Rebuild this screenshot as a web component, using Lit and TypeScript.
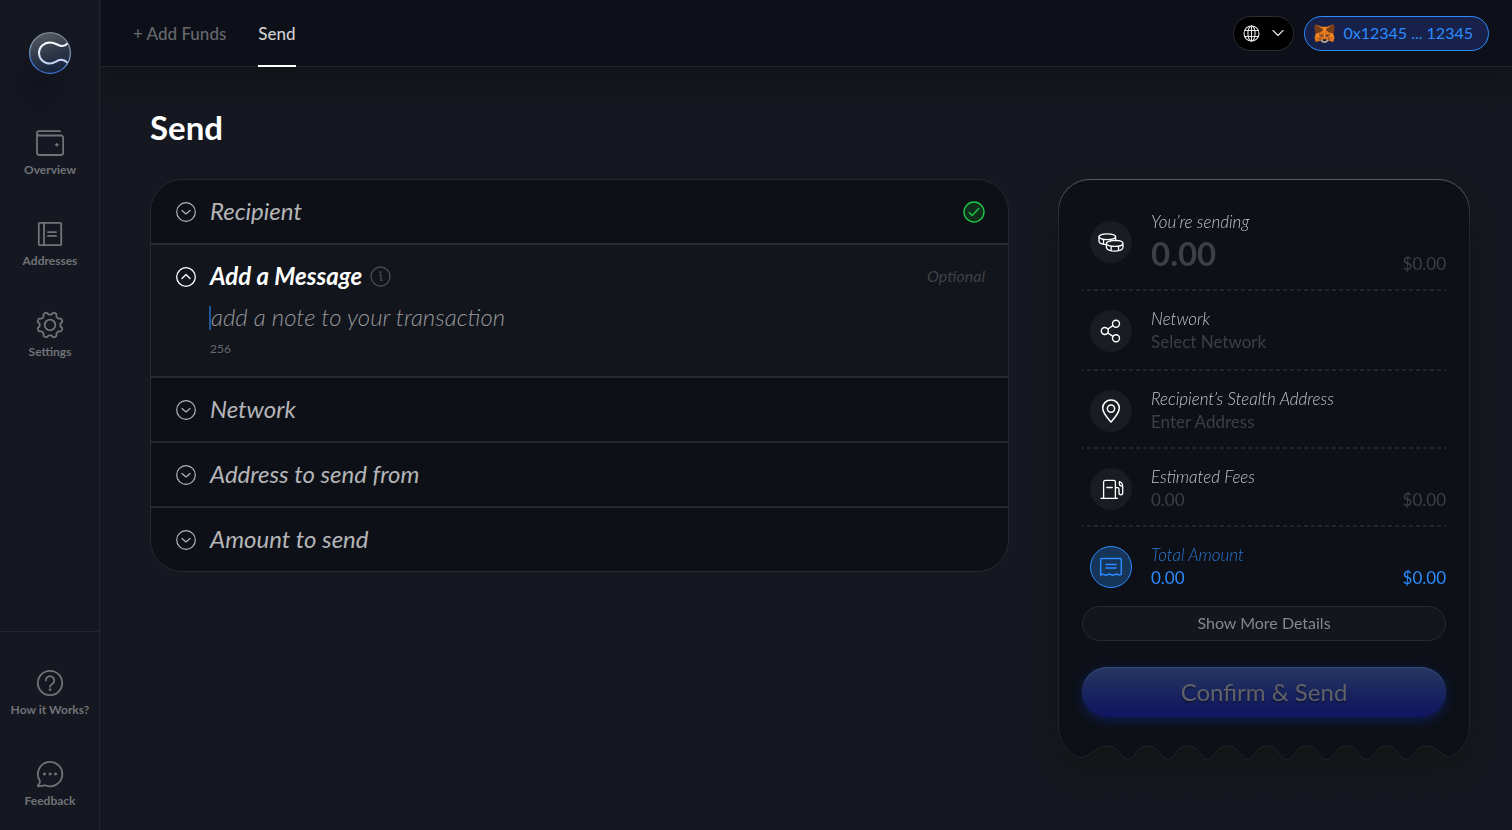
import { LitElement, html, css, svg, type TemplateResult } from "lit";
import { customElement, state } from "lit/decorators.js";
import { classMap } from "lit/directives/class-map.js";

const line = (body: TemplateResult, size: number, width = 1.5) => html`
  <svg width=${size} height=${size} viewBox="0 0 ${size} ${size}" fill="none" stroke="currentColor"
    stroke-width=${width} stroke-linecap="round" stroke-linejoin="round" aria-hidden="true">${body}</svg>`;

/* Outline of an eight-toothed cog centred on (14, 14). */
const cogPath = (() => {
  const pts: string[] = [];
  for (let i = 0; i < 160; i++) {
    const a = (i / 160) * Math.PI * 2;
    const r = 11.6 - 1.3 * Math.tanh(Math.cos(a * 8) * 2.2);
    pts.push(`${(14 + r * Math.sin(a)).toFixed(2)} ${(14 - r * Math.cos(a)).toFixed(2)}`);
  }
  return `M${pts.join("L")}Z`;
})();

const icons = {
  wallet: line(svg`<path d="M24 2.200H2.800A2 2 0 0 0 1 4.200V23.800a2.200 2.200 0 0 0 2.200 2.200h21.800a2.200 2.200 0 0 0 2.200-2.200V8.700A2.200 2.200 0 0 0 25 6.500H3A2.100 2.100 0 0 1 1 4.400"/><circle cx="20.800" cy="15.800" r="1.200" fill="currentColor" stroke-width="1"/>`, 28, 1.8),
  book: line(svg`<rect x="2.800" y="2.800" width="22.400" height="22.400" rx="1"/><path d="M8 3v22M12 12.200h8M12 15.900h8"/>`, 28, 1.8),
  cog: line(svg`<path d=${cogPath}/><circle cx="14" cy="14" r="5.300"/>`, 28, 1.8),
  help: line(svg`<circle cx="14" cy="14" r="12.200"/><path d="M9.800 11.400a4.200 4.200 0 1 1 6.500 3.500c-1.500 1-2.300 1.500-2.300 2.900"/><circle cx="14" cy="20.600" r=".9" fill="currentColor" stroke-width="1"/>`, 28, 1.8),
  chat: line(svg`<path d="M3.700 20.500A12.200 12.200 0 1 1 9.200 25.300C6.800 25.200 4.500 26.200 2.600 26.300 1.500 26.300 1.800 25.400 2.500 24.600 3.500 23.600 4.400 22.400 3.700 20.500z"/><g fill="currentColor" stroke-width="1"><circle cx="8.400" cy="14" r="1.100"/><circle cx="14" cy="14" r="1.100"/><circle cx="19.600" cy="14" r="1.100"/></g>`, 28, 1.8),
  down: line(svg`<circle cx="10" cy="10" r="9.300"/><path d="M6 8.500l4 3.500 4-3.500"/>`, 20, 1.2),
  up: line(svg`<circle cx="10" cy="10" r="9.300"/><path d="M6 11.500l4-4 4 4"/>`, 20, 1.3),
  info: line(svg`<circle cx="10.500" cy="10.500" r="9.500"/><path d="M9.500 9h1.300v5.300h1.200"/><circle cx="10.500" cy="6.200" r=".5" fill="currentColor"/>`, 21, 1.4),
  check: line(svg`<circle cx="11" cy="11" r="10" fill="#0f2f1a"/><path d="M6.200 11.600l3 3 6.600-7"/>`, 22, 1.4),
  globe: line(svg`<circle cx="8.500" cy="8.500" r="7.500"/><ellipse cx="8.500" cy="8.500" rx="3.600" ry="7.500"/><path d="M8.500 1v15M1.900 5.500h13.200M1.900 11.500h13.200"/>`, 17, 1.1),
  chevron: html`<svg width="12" height="8" viewBox="0 0 12 8" fill="none" stroke="currentColor" stroke-width="1.100" stroke-linecap="round" stroke-linejoin="round" aria-hidden="true"><path d="M1 1.500l5 5 5-5"/></svg>`,
  coins: line(svg`<ellipse cx="9.300" cy="7.800" rx="8.300" ry="2.900"/><path d="M1 7.800v4.400c0 1.800 2.900 3.100 7 3.300M17.600 7.800v3.400M5.500 10.500v4.500M12.300 10.500v1.500"/><path d="M17.600 11.300c4.200.1 7.400 1.300 7.400 3.100 0 1.700-3.700 3-8.300 3s-8.300-1.300-8.300-3c0-.9 1.300-1.700 3.300-2.300 1.500-.5 3.500-.8 5.900-.8M8.400 14.400v4.200c0 2 3.700 3.500 8.300 3.500s8.300-1.500 8.300-3.500v-4.200M13.200 17.300v4.300M20.500 17.300v4.200"/>`, 26, 1.3),
  share: line(svg`<circle cx="6.800" cy="13" r="3.500"/><circle cx="18" cy="5.800" r="3.500"/><circle cx="18" cy="20.200" r="3.500"/><path d="M9.900 11l5-3.300M9.900 15l5 3.300"/>`, 26, 1.4),
  pin: line(svg`<path d="M13 24c-1.500-2-8.300-8.200-8.300-13.900C4.700 5.400 8.400 2.100 13 2.100s8.300 3.300 8.300 8C21.300 15.800 14.500 22 13 24z"/><circle cx="13" cy="10.600" r="3.600"/>`, 26, 1.5),
  pump: line(svg`<path d="M3 22.300h16.500M5.600 22V6a1.600 1.600 0 0 1 1.600-1.600h8.600A1.600 1.600 0 0 1 17.400 6v16M8.800 11.500h5.500M17.500 11.600h1.900c1 0 1.600.7 1.600 1.600v3.600c0 2.800 3.700 2.800 3.700 0V10.400c0-2-1.200-4-3.300-4.700v2.600c0 1.200 1 1.600 3 2"/>`, 26, 1.3),
  receipt: line(svg`<path d="M2.700 20.300V5.500c0-.6.4-1 1-1h18.600c.6 0 1 .4 1 1v14.800c-1.500.9-2.500.9-3.400.4-1.200-.8-2.200-.8-3.400 0s-2.300.8-3.500 0-2.300-.8-3.500 0-2.200.8-3.400 0-2-.8-3.400.4z"/><path d="M8 10.400h10M8 14.100h10"/>`, 26, 1.5),
};

const fox = html`
  <svg width="21" height="19" viewBox="0.500 0.500 34.600 32" preserveAspectRatio="none" aria-hidden="true">
    <path fill="#E2761B" d="M32.960 1L19.820 10.720L22.270 4.990zM2.660 1L15.680 10.810L13.350 4.990z"/>
    <path fill="#E4761B" d="M28.230 23.530L24.730 28.870L32.220 30.930L34.360 23.650zM1.270 23.650L3.400 30.930L10.870 28.870L7.390 23.530zM10.470 14.510L8.390 17.650L15.800 17.990L15.550 9.990zM25.150 14.510L19.990 9.900L19.820 17.990L27.230 17.650zM10.870 28.870L15.360 26.710L11.500 23.700zM20.270 26.710L24.730 28.870L24.120 23.700z"/>
    <path fill="#D7C1B3" d="M24.730 28.870L20.270 26.710L20.630 29.610L20.590 30.840zM10.870 28.870L15.030 30.840L15.010 29.610L15.360 26.710z"/>
    <path fill="#CD6116" d="M10.870 28.870L11.530 23.530L7.390 23.650zM24.100 23.530L24.730 28.870L28.230 23.650z"/>
    <path fill="#DB6B18" d="M27.230 17.650L19.820 17.990L20.510 21.780L21.610 19.490L24.240 20.700zM11.380 20.700L14.010 19.490L15.100 21.780L15.800 17.990L8.390 17.650z"/>
    <path fill="#E4751F" d="M8.390 17.650L11.500 23.700L11.380 20.700zM24.250 20.700L24.120 23.700L27.230 17.650zM15.800 17.990L15.100 21.780L15.970 26.250L16.170 20.360zM19.820 17.990L19.470 20.350L19.650 26.250L20.520 21.780z"/>
    <path fill="#F6851B" d="M20.520 21.780L19.650 26.250L20.270 26.710L24.120 23.700L24.250 20.700zM11.380 20.700L11.500 23.700L15.360 26.710L15.970 26.250L15.100 21.780z"/>
    <path fill="#C0AD9E" d="M20.590 30.840L20.630 29.610L20.290 29.320H15.330L15.010 29.610L15.030 30.840L10.870 28.870L12.330 30.070L15.290 32.090H20.330L23.300 30.070L24.730 28.870z"/>
    <path fill="#161616" d="M20.270 26.710L19.650 26.250H15.970L15.360 26.710L15.010 29.610L15.330 29.320H20.290L20.630 29.610z"/>
    <path fill="#763D16" d="M33.520 11.350L34.620 5.990L32.960 1L20.270 10.390L25.150 14.510L32.050 16.520L33.570 14.750L32.910 14.270L33.960 13.310L33.160 12.690L34.210 11.880zM1 5.990L2.100 11.350L1.390 11.880L2.450 12.690L1.650 13.310L2.700 14.270L2.040 14.750L3.560 16.520L10.460 14.510L15.360 10.390L2.660 1z"/>
    <path fill="#F6851B" d="M32.050 16.520L25.150 14.510L27.230 17.650L24.120 23.700L28.230 23.650H34.360zM10.470 14.510L3.560 16.520L1.270 23.650H7.390L11.500 23.700L8.390 17.650zM19.820 17.990L20.270 10.390L22.270 4.990H13.350L15.360 10.390L15.800 17.990L15.960 20.370L15.970 26.250H19.650L19.660 20.370z"/>
    <path fill="#233447" d="M15.100 21.780L11.380 20.700L14.010 19.490zM20.520 21.780L21.610 19.490L24.250 20.700z"/>
  </svg>`;

const logo = html`
  <svg width="42" height="42" viewBox="0 0 42 42" fill="none" role="img" aria-label="Home">
    <defs>
      <linearGradient id="face" x1="14" y1="0" x2="26" y2="42" gradientUnits="userSpaceOnUse">
        <stop stop-color="#5a5c63"/><stop offset=".5" stop-color="#2f3949"/><stop offset="1" stop-color="#12203c"/>
      </linearGradient>
      <linearGradient id="rim" x1="28" y1="0" x2="16" y2="42" gradientUnits="userSpaceOnUse">
        <stop stop-color="#7c808a"/><stop offset=".5" stop-color="#86a3c0"/><stop offset=".85" stop-color="#3a78e0"/><stop offset="1" stop-color="#4a72c0"/>
      </linearGradient>
      <linearGradient id="mark" x1="21" y1="9" x2="21" y2="33" gradientUnits="userSpaceOnUse">
        <stop stop-color="#fff"/><stop offset="1" stop-color="#b9cdf2"/>
      </linearGradient>
    </defs>
    <circle cx="21" cy="21" r="20.400" fill="url(#face)" stroke="url(#rim)" stroke-width="1.200"/>
    <path d="M38.500 11.300c-2.300 2.800-5 3.400-8 2.200-3-1.200-5.500-3-9.300-3-6.500 0-11.200 4.700-11.200 10.500s4.700 10.500 11.200 10.500c3.800 0 6.300-2.800 9.300-3.500 3-.7 5.700.4 8 2.700" stroke="url(#mark)" stroke-width="2"/>
  </svg>`;

/* Torn lower edge: one soft corner, eight scallops, one soft corner. */
const tornEdge = (() => {
  const step = 39.8;
  let d = "M.5 0C.5 15 13 30.500 22.500 30.500C31 30.500 39 19 50 19";
  for (let i = 0; i < 8; i++) {
    const x = 50 + i * step;
    d += `C${x + 13} 19 ${x + 12} 32.600 ${x + step / 2} 32.600S${x + 27} 19 ${x + step} 19`;
  }
  return d + "C379 19 384 29.800 390.700 29.800C398 29.800 411.500 16 411.500 0";
})();

@customElement("side-nav")
class SideNav extends LitElement {
  static styles = css`
    :host { display: flex; flex-direction: column; align-items: center; box-sizing: border-box; border-right: 1px solid #23262c; background: radial-gradient(circle at 40px 85px, #11141c 0, #151820 44px); }
    .logo { margin-top: 32px; height: 42px; }
    .logo svg { display: block; }
    .group { display: flex; flex-direction: column; gap: 43px; width: 100%; }
    .main { margin-top: 55px; }
    .foot { margin-top: auto; box-sizing: border-box; padding: 37px 0 22px; border-top: 1px solid #23262c; }
    .item { display: flex; flex-direction: column; align-items: center; gap: 6px; padding-left: 1px; color: #717377; text-decoration: none; font-size: 12px; line-height: 14px; font-weight: 700; white-space: nowrap; }
    .item svg { display: block; }
  `;
  private item(icon: TemplateResult, label: string) {
    return html`<a class="item" href="#">${icon}<span>${label}</span></a>`;
  }
  render() {
    return html`
      <a class="logo" href="#">${logo}</a>
      <nav class="group main">
        ${this.item(icons.wallet, "Overview")} ${this.item(icons.book, "Addresses")} ${this.item(icons.cog, "Settings")}
      </nav>
      <nav class="group foot">
        ${this.item(icons.help, "How it Works?")} ${this.item(icons.chat, "Feedback")}
      </nav>`;
  }
}

@customElement("top-bar")
class TopBar extends LitElement {
  static styles = css`
    :host { display: flex; justify-content: space-between; align-items: center; box-sizing: border-box; height: 67px; padding: 0 23px 0 32px; border-bottom: 1px solid #23262a; background: #0d1018; box-shadow: 0 18px 28px rgba(16, 19, 20, 0.7); clip-path: inset(0 0 -60px 0); }
    .tabs { display: flex; gap: 32px; align-self: stretch; }
    .tab { display: flex; align-items: center; box-sizing: border-box; margin-bottom: -1px; padding-top: 2px; border-bottom: 2px solid transparent; color: #66686c; text-decoration: none; font-size: 17px; line-height: 20px; font-weight: 500; }
    .tab.active { color: #d0d1d3; border-bottom-color: #fff; }
    .tools { display: flex; gap: 10px; }
    button { display: flex; align-items: center; box-sizing: border-box; height: 35px; margin: 0; border-radius: 18px; font: inherit; cursor: pointer; }
    .lang { gap: 12px; padding: 0 9px; border: 1px solid #2b2d31; background: #000; color: #e6e6e6; }
    .wallet { gap: 8px; padding: 0 15px 0 9px; border: 1px solid #2b8cff; background: #182149; color: #2b8cff; font-size: 16px; line-height: 20px; }
  `;
  render() {
    return html`
      <nav class="tabs">
        <a class="tab" href="#">+ Add Funds</a>
        <a class="tab active" href="#" aria-current="page">Send</a>
      </nav>
      <div class="tools">
        <button class="lang" aria-label="Language">${icons.globe}${icons.chevron}</button>
        <button class="wallet">${fox}<span>0x12345 ... 12345</span></button>
      </div>`;
  }
}

@customElement("send-steps")
class SendSteps extends LitElement {
  static styles = css`
    :host { display: block; box-sizing: border-box; border: 1px solid #26292d; border-radius: 32px; background: #0d1017; overflow: hidden; }
    .step + .step { border-top: 2px solid #26292d; }
    .step.open { background: #12151c; }
    .head { display: flex; align-items: center; box-sizing: border-box; height: 63px; padding: 0 23px 0 25px; }
    .open .head { height: 57px; padding-top: 6px; }
    h2 { margin: 0; font-size: 24px; line-height: 30px; font-weight: 400; }
    .toggle { display: flex; align-items: center; gap: 14px; margin: 0; padding: 0; border: 0; background: none; color: #b4b5b7; font: inherit; font-style: italic; cursor: pointer; }
    .open .toggle { color: #fff; font-weight: 700; }
    .toggle span, .optional { padding-bottom: 2px; }
    svg { display: block; }
    .info { margin-left: 8px; color: #46484c; }
    .done { margin-left: auto; color: #1fc647; }
    .optional { margin-left: auto; color: #3f4145; font-size: 16px; line-height: 20px; font-style: italic; }
    .body { display: flex; flex-direction: column; gap: 10px; padding: 0 23px 20px 58px; }
    .note { box-sizing: border-box; height: 30px; margin: 0; padding: 0 0 0 2px; border: 0; background: linear-gradient(#1d5798, #1d5798) 0 4px / 2px 24px no-repeat; outline: none; color: #fff; font: italic 300 24px/30px Lato, sans-serif; }
    .note::placeholder { color: #96979a; opacity: 1; }
    .left { padding-left: 1px; color: #66686c; font-size: 12px; line-height: 14px; }
  `;
  @state() private open = 1;
  private names = ["Recipient", "Add a Message", "Network", "Address to send from", "Amount to send"];
  render() {
    return this.names.map((name, i) => {
      const message = i === 1;
      const open = this.open === i;
      return html`
        <section class=${classMap({ step: true, open })}>
          <div class="head">
            <h2><button class="toggle" aria-expanded=${open} @click=${() => (this.open = open ? -1 : i)}>${open ? icons.up : icons.down}<span>${name}</span></button></h2>
            ${message ? html`<span class="info">${icons.info}</span><span class="optional">Optional</span>` : ""}
            ${i === 0 ? html`<span class="done">${icons.check}</span>` : ""}
          </div>
          ${message && open ? html`
            <div class="body">
              <input class="note" type="text" maxlength="256" aria-label="Add a Message" placeholder="add a note to your transaction" />
              <span class="left">256</span>
            </div>` : ""}
        </section>`;
    });
  }
}

@customElement("send-receipt")
class SendReceipt extends LitElement {
  static styles = css`
    :host { display: block; filter: drop-shadow(0 16px 16px rgba(17, 20, 18, 0.75)); }
    .sheet { padding: 0 23px 10px; border: 1px solid transparent; border-bottom: 0; border-radius: 32px 32px 0 0; background: linear-gradient(#0d1017, #0d1017) padding-box, linear-gradient(180deg, #58595b 0, #22252a 48px) border-box; }
    .edge { display: block; width: 100%; height: 34px; }
    .row { display: grid; grid-template-columns: 42px 1fr auto; column-gap: 19px; align-items: start; padding: 16px 0 14px 8px; }
    .row.network { padding-bottom: 16px; }
    .row.first { padding-top: 30px; }
    .rule { height: 2px; background: repeating-linear-gradient(90deg, #1e252e 0 2px, transparent 2px 5px, #1e252e 5px 7px); }
    .disc { display: flex; align-items: center; justify-content: center; box-sizing: border-box; width: 42px; height: 42px; margin-top: 3px; border-radius: 50%; background: #191c23; color: #fff; }
    .first .disc { margin-top: 11px; }
    .label { color: #c3c4c6; font-size: 17px; line-height: 23px; font-weight: 300; font-style: italic; }
    .value, .fiat { color: #3c3f43; font-size: 17px; line-height: 23px; }
    .fiat { align-self: end; }
    .first .value { padding-bottom: 1px; font-size: 33px; line-height: 41px; font-weight: 700; }
    .total .disc { border: 1px solid #2b8cff; background: #173459; color: #2b8cff; }
    .total .label { color: #2a76cd; }
    .total .value, .total .fiat { color: #2b8cff; }
    button { display: block; box-sizing: border-box; width: 100%; margin: 0; padding: 0 0 2px; font-family: inherit; cursor: pointer; }
    .more { height: 35px; margin-top: 3px; border: 1px solid #282a2e; border-radius: 18px; background: #13161c; color: #85878a; font-size: 16px; }
    .confirm { height: 50px; margin-top: 26px; border: 0; border-radius: 25px; background: linear-gradient(180deg, #263660 0%, #18235f 55%, #101560 100%); box-shadow: 0 3px 12px rgba(14, 36, 110, 0.75), inset 0 1px 1px #35497a; color: #606266; font-size: 24px; text-shadow: 0 2px 2px rgba(0, 0, 0, 0.35); }
  `;
  private row(icon: TemplateResult, label: string, value: string, fiat = "", cls = "") {
    return html`
      <div class="row ${cls}">
        <span class="disc">${icon}</span>
        <div><div class="label">${label}</div><div class="value">${value}</div></div>
        <span class="fiat">${fiat}</span>
      </div>`;
  }
  render() {
    return html`
      <div class="sheet">
        ${this.row(icons.coins, "You’re sending", "0.00", "$0.00", "first")}
        <div class="rule"></div>
        ${this.row(icons.share, "Network", "Select Network", "", "network")}
        <div class="rule"></div>
        ${this.row(icons.pin, "Recipient’s Stealth Address", "Enter Address")}
        <div class="rule"></div>
        ${this.row(icons.pump, "Estimated Fees", "0.00", "$0.00")}
        <div class="rule"></div>
        ${this.row(icons.receipt, "Total Amount", "0.00", "$0.00", "total")}
        <button class="more">Show More Details</button>
        <button class="confirm">Confirm &amp; Send</button>
      </div>
      <svg class="edge" viewBox="0 0 412 34" preserveAspectRatio="none" aria-hidden="true">
        <path d="${tornEdge}" fill="#0d1017" stroke="#22252a"/>
      </svg>`;
  }
}

@customElement("app-root")
class AppRoot extends LitElement {
  static styles = css`
    :host { display: grid; grid-template-columns: 100px minmax(0, 1fr); min-height: 100vh; background: #151820; color: #fff; font-family: Lato, sans-serif; }
    .page { display: flex; flex-direction: column; padding-left: 1px; }
    main { padding: 40px 42px 40px 49px; }
    h1 { margin: 0 0 32px; font-size: 33px; line-height: 40px; font-weight: 700; }
    .columns { display: grid; grid-template-columns: minmax(0, 1fr) 412px; gap: 49px; align-items: start; }
  `;
  render() {
    return html`
      <side-nav></side-nav>
      <div class="page">
        <top-bar></top-bar>
        <main>
          <h1>Send</h1>
          <div class="columns">
            <send-steps></send-steps>
            <send-receipt></send-receipt>
          </div>
        </main>
      </div>`;
  }
}
